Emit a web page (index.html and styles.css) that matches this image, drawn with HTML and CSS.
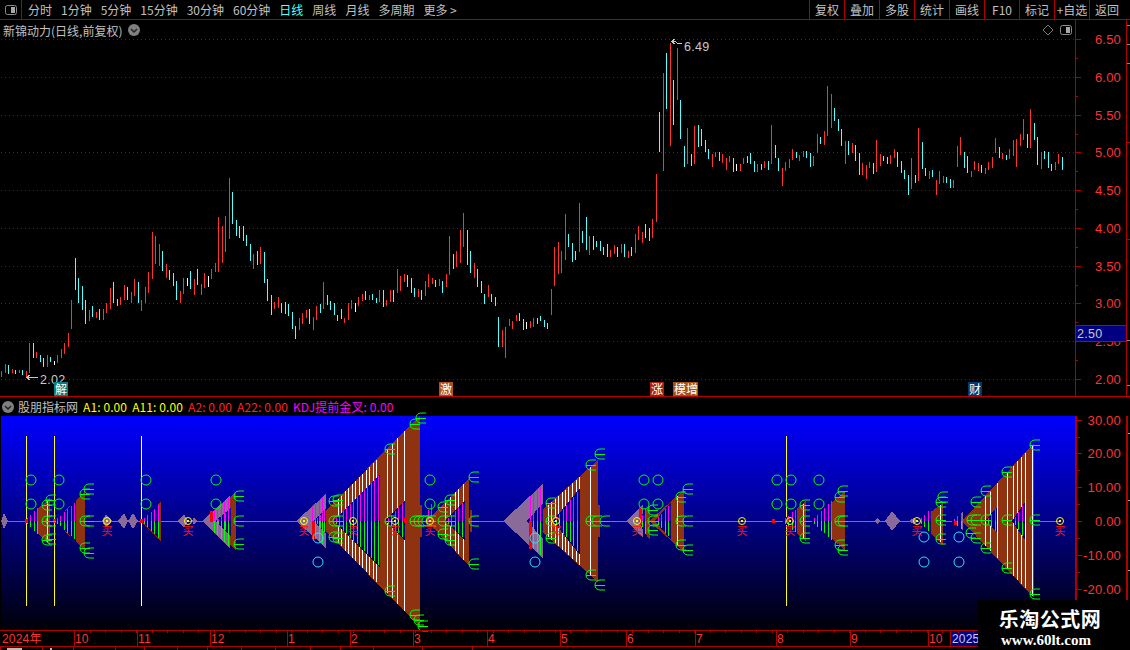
FILE: index.html
```html
<!DOCTYPE html>
<html lang="en">
<head>
    <meta charset="UTF-8">
    <meta name="viewport" content="width=device-width, initial-scale=1.0">
    <title>新锦动力 - 日线</title>
    <link rel="stylesheet" href="styles.css">
</head>
<body>
    <div class="screen">
        <div class="toolbar">
            <div class="tool-icon">
                <svg width="12" height="10" viewBox="0 0 12 10"><rect x="0.5" y="0.5" width="11" height="9" rx="2" class="toggle-frame"/><rect x="6" y="2" width="4" height="6" class="toggle-fill"/></svg>
            </div>
            <div class="tool-left">
                <span>分时</span>
                <span>1分钟</span>
                <span>5分钟</span>
                <span>15分钟</span>
                <span>30分钟</span>
                <span>60分钟</span>
                <span class="active">日线</span>
                <span>周线</span>
                <span>月线</span>
                <span>多周期</span>
                <span>更多 &gt;</span>
            </div>
            <div class="tool-right">
                <span>复权</span>
                <span>叠加</span>
                <span>多股</span>
                <span>统计</span>
                <span>画线</span>
                <span>F10</span>
                <span>标记</span>
                <span>+自选</span>
                <span>返回</span>
            </div>
        </div>

        <div class="main-panel">
            <div class="panel-title">
                <span>新锦动力(日线,前复权)</span>
                <svg class="chevron" width="12" height="12" viewBox="0 0 12 12"><circle cx="6" cy="6" r="6" fill="#808080"/><path d="M3 5 L6 8 L9 5" class="chevron-line"/></svg>
            </div>
            <div class="panel-icons">
                <svg width="12" height="12" viewBox="0 0 12 12"><path d="M6 1 L11 6 L6 11 L1 6 Z" class="diamond-line"/></svg>
                <svg width="12" height="10" viewBox="0 0 12 10"><rect x="0.5" y="0.5" width="11" height="9" rx="2" class="toggle-frame"/><rect x="6" y="2" width="4" height="6" class="toggle-fill"/></svg>
            </div>
            <svg id="price-chart" width="1130" height="376" viewBox="0 20 1130 376"></svg>
        </div>

        <div class="sub-header">
            <svg class="chevron" width="12" height="12" viewBox="0 0 12 12"><circle cx="6" cy="6" r="6" fill="#808080"/><path d="M3 5 L6 8 L9 5" class="chevron-line"/></svg>
            <span class="sub-name">股朋指标网</span>
            <span class="val-yellow">A1: 0.00</span>
            <span class="val-yellow">A11: 0.00</span>
            <span class="val-red">A2: 0.00</span>
            <span class="val-red">A22: 0.00</span>
            <span class="val-pink">KDJ提前金叉: 0.00</span>
        </div>
        <svg id="signal-chart" width="1130" height="214" viewBox="0 416 1130 214"></svg>
        <svg id="date-axis" width="1130" height="20" viewBox="0 630 1130 20"></svg>

        <div class="watermark">
            <div class="wm-name">乐淘公式网</div>
            <div class="wm-url">www.60lt.com</div>
        </div>
    </div>
    <script src="script.js"></script>
</body>
</html>
```

FILE: styles.css
```css
body {
    margin: 0;
    background: #000;
    font-family: "Noto Sans CJK SC", "Liberation Sans", sans-serif;
    color: #c0c0c0;
    font-size: 12px;
}
.screen {
    position: relative;
    width: 1130px;
    height: 650px;
    overflow: hidden;
    background: #000;
}
svg {
    display: block;
}
#signal-chart {
    overflow: visible;
}
.toolbar {
    display: flex;
    align-items: center;
    height: 19px;
    border-bottom: 1px solid #b00000;
    line-height: 19px;
}
.tool-icon {
    display: flex;
    align-items: center;
    justify-content: center;
    width: 21px;
    height: 19px;
    border-right: 1px solid #b00000;
}
.tool-left {
    display: flex;
    gap: 9px;
    margin-left: 6px;
}
.tool-left .active {
    color: #54ffff;
}
.tool-right {
    display: flex;
    margin-left: auto;
    margin-right: 6px;
}
.tool-right span {
    width: 34px;
    height: 19px;
    border-left: 1px solid #b00000;
    text-align: center;
    white-space: nowrap;
}
.toggle-frame {
    fill: none;
    stroke: #8c8c8c;
}
.toggle-fill {
    fill: #a8a8a8;
}
.chevron {
    flex: none;
}
.chevron-line {
    fill: none;
    stroke: #222;
    stroke-width: 1.5;
}
.diamond-line {
    fill: none;
    stroke: #777;
}
.main-panel {
    position: relative;
    height: 376px;
    border-bottom: 1px solid #c00000;
}
.panel-title {
    position: absolute;
    left: 3px;
    top: 1px;
    display: flex;
    align-items: center;
    gap: 6px;
    height: 18px;
    white-space: nowrap;
}
.panel-icons {
    position: absolute;
    left: 1042px;
    top: 4px;
    display: flex;
    align-items: center;
    gap: 6px;
}
.sub-header {
    display: flex;
    align-items: center;
    gap: 5px;
    height: 19px;
    padding-left: 2px;
    white-space: nowrap;
    letter-spacing: 0.1px;
}
.sub-name {
    margin-left: -1px;
    letter-spacing: 0;
}
.val-yellow {
    color: #ffff00;
}
.val-red {
    color: #ff2020;
}
.val-pink {
    color: #ff00ff;
}
.axis-num {
    font-family: "Liberation Sans", sans-serif;
    font-size: 13px;
    letter-spacing: 0.2px;
    fill: #ff3232;
}
.date-num {
    font-family: "Liberation Sans", "Noto Sans CJK SC", sans-serif;
    font-size: 12px;
    letter-spacing: 0.2px;
    fill: #ff3232;
}
.date-year {
    fill: #c8c8ff;
}
.mark-char {
    font-size: 12px;
    fill: #fff;
}
.low-high {
    font-family: "Liberation Sans", sans-serif;
    font-size: 12.5px;
    letter-spacing: 0.3px;
    fill: #c8c8c8;
}
.buy-char {
    font-size: 11px;
    fill: #ff1010;
}
.crisp {
    shape-rendering: crispEdges;
}
.soft {
    shape-rendering: auto;
}
.watermark {
    position: absolute;
    left: 978px;
    top: 600px;
    width: 152px;
    height: 50px;
    background: #000;
    text-align: center;
    color: #fff;
}
.wm-name {
    margin-top: 8px;
    margin-left: -8px;
    font-size: 20px;
    font-weight: 700;
    line-height: 22px;
    letter-spacing: 0.5px;
}
.wm-url {
    font-family: "Liberation Serif", serif;
    font-size: 15px;
    font-weight: 700;
    line-height: 15px;
    margin-top: 3px;
    margin-left: -16px;
}
```

FILE: script.js
```js
// candle colours
const COL = { r: '#ff3232', c: '#54ffff', w: '#ffffff' };
const BROWN = '#8f3210';
const MAUVE = '#8a6a98';
const LINE = '#b00000';

// one entry per trading day: colour, high y, low y. x comes from the index
const bars = [
    ['r',371,377],['r',364,373],['c',365,374],['r',369,373],['c',370,374],['r',370,373],['c',370,375],['r',371,377],
    ['r',343,373],['c',343,358],['r',352,358],['c',355,362],['c',358,367],['r',355,367],['c',357,362],['w',361,365],
    ['r',355,363],['r',349,358],['r',343,354],['r',333,347],['r',300,329],['c',258,290],['c',278,303],['c',286,310],
    ['c',300,324],['r',310,321],['c',306,317],['r',312,318],['c',309,320],['r',309,320],['r',303,313],['r',288,309],
    ['c',282,303],['c',299,306],['r',297,305],['r',285,300],['c',287,300],['r',292,303],['r',279,296],['c',282,303],
    ['r',300,311],['r',287,303],['r',272,293],['r',232,279],['r',236,264],['r',244,266],['c',251,271],['r',264,278],
    ['c',270,280],['c',273,286],['c',281,300],['r',291,303],['r',278,294],['w',278,286],['c',271,289],['r',279,295],
    ['c',269,285],['r',284,295],['r',273,288],['w',276,287],['r',269,279],['r',263,272],['r',217,272],['r',226,263],
    ['r',216,252],['r',178,239],['c',192,224],['c',220,236],['c',226,238],['c',226,241],['c',235,246],['c',244,261],
    ['r',254,269],['c',251,265],['r',247,264],['c',252,283],['c',279,301],['c',295,315],['r',302,309],['r',297,308],
    ['c',303,313],['c',302,314],['c',304,316],['c',312,329],['c',326,339],['r',318,330],
    ['r',313,324],['r',310,318],['c',309,324],['r',317,330],['r',306,320],['c',304,313],['r',282,309],['c',295,305],
    ['c',301,310],['c',303,315],['c',315,321],['c',309,319],['r',318,323],['r',303,320],['r',300,309],['w',303,312],
    ['r',297,306],['r',294,301],['c',291,300],['r',295,300],['c',294,300],['c',298,303],['r',290,302],['c',290,307],
    ['r',300,306],['r',290,302],['c',290,302],['r',269,293],['r',276,291],['r',274,282],['c',275,287],['c',278,293],
    ['c',288,297],['r',289,297],['c',290,300],['r',281,296],['r',274,287],['r',278,284],['c',280,287],['r',279,286],
    ['c',281,293],['r',274,287],['r',236,275],['c',254,269],['r',251,267],['r',230,263],['r',213,247],['c',230,265],
    ['c',251,273],['r',263,278],['c',269,287],['c',281,293],['c',294,304],['r',285,297],['c',294,302],['c',297,306],
    ['c',317,347],['r',330,347],['r',327,358],['r',319,326],['r',321,329],['r',315,321],['c',313,321],['c',319,330],
    ['w',322,329],['r',321,328],['r',318,327],['c',318,324],['c',316,321],['c',320,327],['c',323,329],['r',289,315],
    ['r',247,286],['r',242,274],['r',251,273],['r',214,260],['c',234,247],['c',243,262],['c',251,260],['r',203,252],
    ['c',231,243],['c',217,250],['r',236,255],['c',236,250],['c',241,247],['c',241,251],['c',247,255],['c',244,257],
    ['r',250,257],['r',245,254],['c',247,257],['r',244,253],['c',244,257],['r',251,258],
    ['c',247,256],['r',234,253],['r',226,240],['r',232,243],['c',224,238],['c',228,241],['r',219,238],
    ['r',174,222],['c',112,152],['r',73,171],['c',53,109],['r',43,146],['c',80,125],['r',48,100],['c',100,139],
    ['c',146,167],['r',128,164],['c',154,166],['r',126,164],['c',125,147],['c',129,146],['c',140,152],['c',149,159],
    ['r',154,167],['r',152,157],['c',152,161],['r',154,163],['r',158,170],['r',156,162],['c',158,172],['w',164,171],
    ['r',164,171],['r',158,164],['c',156,163],['c',153,164],['c',161,172],['r',164,172],['c',164,170],['r',161,168],
    ['c',161,170],['r',125,164],['c',145,158],['c',158,171],['r',168,186],['r',162,171],['r',159,168],['r',149,160],
    ['c',152,158],['r',155,161],['r',151,157],['c',151,158],['c',153,167],['r',156,166],['r',134,153],['c',137,144],
    ['r',131,145],['r',86,136],['r',94,128],['c',108,121],['c',119,131],['c',129,146],['r',141,164],['c',141,155],
    ['r',143,153],['c',145,161],['c',153,175],
    ['r',163,175],['r',165,179],['r',162,168],['c',163,174],['r',140,172],['r',154,166],['c',156,161],['c',157,164],
    ['r',155,164],['r',149,158],['c',152,167],['c',161,173],['c',170,179],['c',175,195],['r',158,189],['c',175,183],
    ['r',128,181],['c',142,169],['c',168,176],['r',171,179],['c',170,177],['r',180,195],['r',171,184],['r',176,183],
    ['c',177,183],['c',179,188],['r',180,188],['r',146,167],['r',137,155],['c',152,168],['c',156,173],['r',171,177],
    ['r',161,170],['r',163,171],['c',165,173],['r',168,174],['r',162,170],['r',157,168],['r',138,153],['c',147,158],
    ['r',153,159],['c',155,160],['r',149,159],['r',140,156],['r',139,167],['r',134,146],['r',119,140],['c',134,148],
    ['r',109,148],['c',123,140],['c',137,165],['r',152,169],['c',151,159],['c',152,168],['c',164,171],['r',162,170],
    ['r',154,164],['c',157,170]
];

const priceLevels = [[39,'6.50'],[77,'6.00'],[115,'5.50'],[152,'5.00'],[190,'4.50'],[228,'4.00'],[266,'3.50'],[303,'3.00'],[341,'2.50'],[379,'2.00']];
const signalLevels = [[420,'30.00'],[453,'20.00'],[487,'10.00'],[521,'0.00'],[555,'-10.00'],[589,'-20.00']];

function rect(x, y, w, h, fill) {
    return `<rect x="${x}" y="${y}" width="${w}" height="${h}" fill="${fill}"/>`;
}

function buildPriceChart() {
    let out = '<g class="crisp">';
    priceLevels.forEach(([y]) => {
        out += `<line x1="1" x2="1075" y1="${y + 0.5}" y2="${y + 0.5}" stroke="#a00000" stroke-dasharray="1 3"/>`;
    });
    bars.forEach(([c, hi, lo], i) => {
        out += rect(Math.floor(1.5 + 3.5 * i), hi, 1, lo - hi, COL[c]);
    });
    // axis
    out += rect(1075, 20, 1, 376, LINE) + rect(1126, 20, 1, 376, LINE);
    priceLevels.forEach(([y], i) => {
        out += rect(1075, y, 6, 1, LINE);
        if (i < priceLevels.length - 1) out += rect(1075, y + 19, 3, 1, LINE);
    });
    [25, 44, 63, 142, 239, 340, 385].forEach(y => { out += rect(1127, y, 3, 1, y === 142 || y === 239 ? LINE : '#888'); });
    // low and high pointers
    out += '<path d="M26 377.5 H38 M26 377.5 L30 375 M26 377.5 L30 380" stroke="#c8c8c8" fill="none"/>';
    out += '<path d="M671 41.5 H675 L678 43.5 H682 M671 41.5 L675 39 M671 41.5 L675 44" stroke="#c8c8c8" fill="none"/>';
    out += '</g>';
    priceLevels.forEach(([y, label]) => {
        out += `<text class="axis-num" x="1121" y="${y + 5}" text-anchor="end">${label}</text>`;
    });
    out += `<g class="crisp">${rect(1075.5, 325.5, 51, 16, '#000080').replace('/>', ' stroke="#c00000"/>')}</g>`;
    out += '<text class="low-high" x="1077" y="338">2.50</text>';
    out += '<text class="low-high" x="40" y="384">2.02</text>';
    out += '<text class="low-high" x="684" y="51">6.49</text>';
    // day markers sit on top of the pointer labels
    out += '<g class="crisp">';
    [[54,14,'#008080'],[439,14,'#b05020'],[650,14,'#a82010'],[673,25,'#a85010'],[968,14,'#003870']].forEach(([x, w, bg]) => {
        out += rect(x, 382, w, 14, bg);
    });
    out += '</g>';
    [[55,'解'],[440,'激'],[651,'涨'],[674,'模增'],[969,'财']].forEach(([x, t]) => {
        out += `<text class="mark-char" x="${x}" y="393.5">${t}</text>`;
    });
    document.getElementById('price-chart').innerHTML = out;
}

// half height of a triangle (apex at ax on the zero line) at position x
function edge(ax, bx, end, x) {
    return 521 + (end - 521) * (x - ax) / (bx - ax);
}

function tri(ax, bx, top, bot, fill) {
    return `<polygon points="${ax},521 ${bx},${top} ${bx},${bot}" fill="${fill}"/>`;
}

// magenta above the zero line, green below, reaching the edges of the triangle
function stripes(ax, bx, top, bot, from, to) {
    let out = '';
    for (let x = from; x <= to; x += 3.5) {
        const sx = Math.floor(x);
        const y1 = Math.round(edge(ax, bx, top, sx));
        const y2 = Math.round(edge(ax, bx, bot, sx));
        out += rect(sx, y1, 1, 521 - y1, '#ff00ff') + rect(sx, 521, 1, y2 - 521, '#00ff00');
    }
    return out;
}

function fan(ax, bx, top, bot, fill, inners, whites) {
    let out = tri(ax, bx, top, bot, fill);
    (whites || []).forEach(x => {
        const y1 = Math.round(edge(ax, bx, top, x));
        const y2 = Math.round(edge(ax, bx, bot, x));
        out += rect(x, y1, 1, y2 - y1, '#fff');
    });
    (inners || []).forEach(([ix, jx, t, b, start]) => {
        out += tri(ix, jx, t, b, 'url(#sky)');
        out += stripes(ix, jx, t, b, start || ix + 3, jx);
    });
    return out;
}

function diamond(x1, x2, peak, h) {
    return `<polygon points="${x1},521 ${peak},${521 - h} ${x2},521 ${peak},${521 + h}" fill="${MAUVE}"/>`;
}

function fork(x, y) {
    return `<path class="soft" d="M${x + 10} ${y - 5} H${x + 5} C${x + 2} ${y - 5} ${x} ${y - 3} ${x} ${y} C${x} ${y + 3} ${x + 2} ${y + 5} ${x + 5} ${y + 5} H${x + 10} M${x} ${y + 0.5} H${x + 10}" fill="none" stroke="#00ff00"/>`;
}

function range(from, to, step) {
    const list = [];
    for (let x = from; x <= to; x += step) list.push(Math.floor(x));
    return list;
}

function buildSignalChart() {
    let out = `<defs><linearGradient id="sky" gradientUnits="userSpaceOnUse" x1="0" y1="416" x2="0" y2="630">
        <stop offset="0" stop-color="#0000ff"/><stop offset="1" stop-color="#000008"/></linearGradient></defs>`;
    out += '<g class="crisp">';
    out += rect(1, 416, 1074, 214, 'url(#sky)');
    out += rect(1, 521, 1060, 1, MAUVE);

    [[26,'#ffff00'],[54,'#ffff00'],[141,'#fffff0'],[786,'#ffff00']].forEach(([x, c]) => {
        out += rect(x, 436, 1, 170, c);
    });

    // small diamonds
    out += diamond(1, 8, 4, 8) + diamond(102, 112, 106, 7) + diamond(118, 128, 124, 8) + diamond(128, 138, 133, 8);
    out += diamond(177, 188, 184, 7) + diamond(192, 197, 194, 4) + diamond(874, 881, 877, 3);
    out += diamond(885, 900, 892, 10) + diamond(909, 917, 914, 3);

    // the fans
    out += fan(24, 50, 498, 545, BROWN, [[24, 38, 507, 535]], [47]);
    out += fan(54, 85, 492, 550, BROWN, [[54, 76, 501, 541]]);
    out += fan(141, 161, 502, 542, BROWN, [[141, 158, 505, 538]]);
    out += fan(202, 236, 492, 550, BROWN);
    out += fan(202, 230, 496, 548, MAUVE, [[215, 231, 508, 536]]);
    out += stripes(202, 230, 496, 548, 214, 229);
    out += fan(316, 420, 415, 627, BROWN, [[333, 380, 474, 567], [385, 405, 500, 540]],
        range(338, 379, 3.5).concat([387, 392, 397, 404]));
    out += rect(420, 505, 2, 32, BROWN);
    out += fan(296, 326, 494, 548, MAUVE, [[314, 326, 508, 534]]);
    out += stripes(296, 326, 494, 548, 312, 325);
    out += fan(427, 469, 478, 566, BROWN, [[445, 465, 500, 540]], [445, 450, 455, 458, 463]);
    out += rect(470, 510, 2, 22, BROWN);
    out += rect(428, 510, 1, 11, '#ff00ff') + rect(431, 504, 1, 17, '#ff00ff');
    out += fan(530, 598, 460, 582, BROWN, [[553, 580, 488, 555]], [548, 551, 555, 558, 562, 565, 568, 572, 576, 579, 590]);
    out += rect(598, 505, 2, 32, BROWN);
    out += fan(503, 543, 484, 558, MAUVE, [[527, 543, 503, 539]]);
    out += stripes(503, 543, 484, 558, 530, 541);
    out += fan(636, 650, 505, 540, BROWN);
    out += fan(626, 643, 505, 537, MAUVE, [[639, 646, 507, 536, 642]]);
    out += fan(649, 684, 490, 552, BROWN, [[655, 671, 502, 540]], [677]);
    out += fan(782, 806, 501, 541, BROWN, [[782, 797, 508, 534]], [803]);
    out += fan(811, 845, 491, 550, BROWN, [[811, 832, 500, 541]]);
    out += fan(918, 943, 503, 545, BROWN, [[918, 931, 508, 534]], [940]);
    out += fan(962, 1034, 443, 598, BROWN, [[985, 997, 507, 533], [1012, 1025, 502, 540]],
        [985, 990, 997, 1007, 1013, 1017, 1021, 1025, 1032]);
    out += fan(951, 963, 512, 530, MAUVE, [[951, 962, 512, 530]]);

    // red bars
    [[25,519,3,4],[53,519,3,4],[140,519,3,4],[210,511,3,11],[312,521,3,18],[529,521,3,28],[639,507,3,18],[772,519,3,4],[787,517,3,5],[954,521,3,4],[404,518,3,5]].forEach(([x, y, w, h]) => {
        out += rect(x, y, w, h, '#ff0000');
    });

    // forks
    [[42,505],[46,500],[42,521],[46,521],[42,540],[46,539],[80,494],[84,489],[80,521],[84,521],[80,548],[84,553],
     [234,496],[234,521],[234,544],[329,501],[333,500],[329,521],[333,521],[329,537],[333,538],
     [385,449],[385,521],[385,591],[410,424],[416,418],[410,521],[414,521],[418,521],[422,521],[426,521],
     [410,615],[414,620],[418,626],[438,507],[438,521],[438,534],[445,500],[445,521],[445,540],[469,477],[469,521],[469,564],
     [546,503],[546,521],[546,538],[586,465],[595,454],[586,521],[592,521],[600,521],[586,575],[595,585],
     [648,510],[648,521],[648,530],[676,497],[676,521],[676,545],[683,489],[683,521],[683,550],
     [800,505],[800,521],[800,538],[835,497],[835,521],[835,545],[838,491],[838,521],[838,550],
     [936,502],[938,497],[936,520],[936,539],[967,520],[971,502],[971,520],[966,533],[971,538],
     [981,491],[981,520],[981,548],[1002,472],[1002,520],[1002,568],[1030,445],[1030,520],[1030,594]].forEach(([x, y]) => {
        out += fork(x, y);
    });

    // circles
    [[31,480],[31,504],[59,480],[59,504],[146,480],[146,504],[216,480],[216,504],[430,480],[430,504],
     [644,480],[658,480],[644,504],[658,504],[777,480],[791,480],[819,480],[777,504],[791,504],[819,504]].forEach(([x, y]) => {
        out += `<circle class="soft" cx="${x}" cy="${y}" r="5" fill="none" stroke="#00ff00"/>`;
    });
    [[318,538],[318,562],[535,538],[535,562],[924,537],[924,562],[959,537],[959,562]].forEach(([x, y]) => {
        out += `<circle class="soft" cx="${x}" cy="${y}" r="5" fill="none" stroke="#30e0ff"/>`;
    });

    // buy marks
    const buys = [107, 188, 304, 353, 395, 430, 556, 637, 742, 790, 917, 1060];
    buys.forEach(x => {
        out += `<circle class="soft" cx="${x}" cy="521" r="3.5" fill="none" stroke="#ffff00"/>` + rect(x - 1, 520, 2, 2, '#ffff00');
    });

    // axis
    out += rect(1075, 416, 2, 214, LINE) + rect(1126, 416, 2, 214, LINE);
    signalLevels.forEach(([y]) => {
        out += rect(1077, y, 5, 1, LINE) + rect(1077, y + 17, 3, 1, LINE);
    });
    [433, 500, 570].forEach(y => { out += rect(1128, y, 2, 1, '#aaa'); });
    out += '</g>';

    buys.forEach(x => {
        out += `<text class="buy-char" x="${x}" y="535" text-anchor="middle">买</text>`;
    });
    signalLevels.forEach(([y, label]) => {
        out += `<text class="axis-num" x="1121" y="${y + 5}" text-anchor="end">${label}</text>`;
    });
    document.getElementById('signal-chart').innerHTML = out;
}

function buildDateAxis() {
    const months = [[74,'10'],[137,'11'],[210,'12'],[287,'1'],[350,'2'],[413,'3'],[487,'4'],[560,'5'],[626,'6'],[695,'7'],[776,'8'],[850,'9'],[928,'10']];
    let out = '<g class="crisp">';
    out += rect(0, 630, 1130, 1, LINE) + rect(0, 646, 1130, 1, LINE);
    out += rect(951, 631, 27, 15, '#000080');
    months.forEach(([x]) => { out += rect(x, 630, 1, 16, LINE); });
    out += rect(950, 630, 1, 16, LINE);
    for (let x = 90; x < 978; x += 15.5) {
        out += rect(Math.floor(x), 631, 1, 2, LINE);
    }
    [0, 42, 73, 115, 144, 177, 207, 241, 275, 310, 340, 373, 422, 472].forEach(x => {
        out += rect(x, 647, 1, 3, LINE);
    });
    out += rect(7, 648, 15, 2, '#bbb') + rect(50, 648, 2, 2, '#bbb');
    out += rect(1075, 630, 2, 20, LINE) + rect(1126, 630, 2, 20, LINE);
    out += '</g>';
    out += '<text class="date-num" x="2" y="643">2024年</text>';
    months.forEach(([x, label]) => {
        out += `<text class="date-num" x="${x + 1}" y="643">${label}</text>`;
    });
    out += '<text class="date-num date-year" x="952" y="643">2025</text>';
    document.getElementById('date-axis').innerHTML = out;
}

buildPriceChart();
buildSignalChart();
buildDateAxis();
```
